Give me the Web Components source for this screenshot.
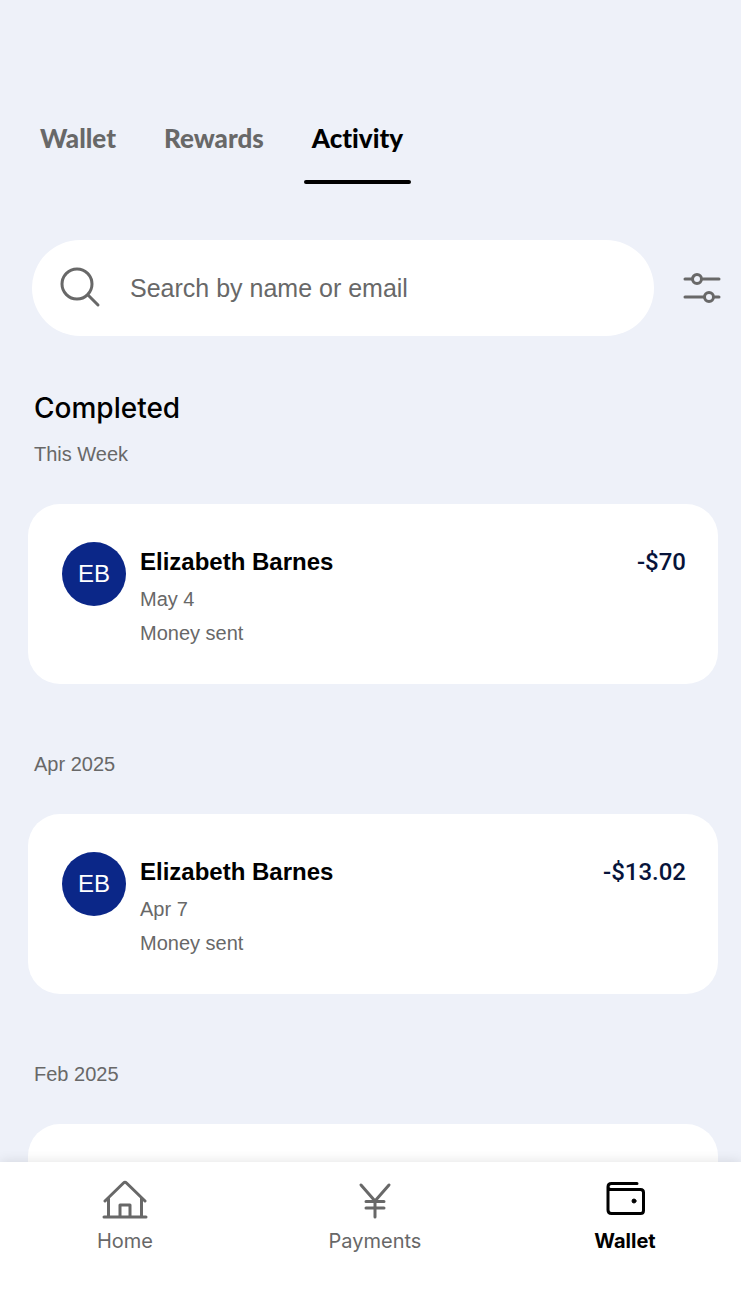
<!DOCTYPE html>
<html lang="en">
<head>
<meta charset="utf-8">
<meta name="viewport" content="width=device-width, initial-scale=1">
<title>Activity</title>
<style>
  body {
    margin: 0;
    background: #eef1f9;
    color: #000;
    font-family: Inter, "Liberation Sans", sans-serif;
    --muted: #686868;
    --navy: #0b2788;
  }
</style>
</head>
<body>
<wallet-app>
  <wallet-tabs slot="header"></wallet-tabs>
  <activity-search></activity-search>
  <activity-section heading="Completed">
    <activity-group label="This Week">
      <activity-item name="Elizabeth Barnes" initials="EB" date="May 4" amount="-$70">Money sent</activity-item>
    </activity-group>
    <activity-group label="Apr 2025">
      <activity-item name="Elizabeth Barnes" initials="EB" date="Apr 7" amount="-$13.02">Money sent</activity-item>
    </activity-group>
    <activity-group label="Feb 2025"></activity-group>
  </activity-section>
  <bottom-nav slot="footer">
    <nav-item label="Home">
      <svg width="48" height="40" viewBox="0 0 48 40" fill="none" stroke="currentColor" stroke-width="3" stroke-linecap="round" stroke-linejoin="round" aria-hidden="true"><path d="M4 21 22.500 3Q24 1.500 25.500 3L44 21M7.500 18.500V37M40.500 18.500V37M3 37H45M19 37V25H29V37"/></svg>
    </nav-item>
    <nav-item label="Payments">
      <svg width="48" height="40" viewBox="0 0 48 40" fill="none" stroke="currentColor" stroke-width="3" stroke-linecap="round" stroke-linejoin="round" aria-hidden="true"><path d="M10 5 24 21 38 5M24 21V37M15 21.500H33M15 28H33"/></svg>
    </nav-item>
    <nav-item label="Wallet" current>
      <svg width="48" height="40" viewBox="0 0 48 40" fill="none" stroke="currentColor" stroke-width="3" stroke-linecap="round" stroke-linejoin="round" aria-hidden="true"><path d="M36 3.500H10.500Q7 3.500 7 7V30Q7 33.500 10.500 33.500H39.500Q42.500 33.500 42.500 30.500V12.500Q42.500 9.500 39.500 9.500H10Q7 9.500 7 6.500"/><circle cx="33" cy="21" r="2" fill="currentColor" stroke-width="1"/></svg>
    </nav-item>
  </bottom-nav>
</wallet-app>

<script>
  class BaseElement extends HTMLElement {
    connectedCallback() {
      if (this.shadowRoot) return;
      this.attachShadow({ mode: "open" }).innerHTML = this.render();
    }
    attr(name) { return this.getAttribute(name) || ""; }
  }

  customElements.define("wallet-app", class extends BaseElement {
    render() {
      return `<style>
        :host { display: grid; grid-template-rows: auto minmax(0, 1fr) auto; height: 100vh; }
        main { overflow: auto; scrollbar-width: none; padding: 56px 20px 0 28px; }
      </style>
      <header><slot name="header"></slot></header>
      <main><slot></slot></main>
      <slot name="footer"></slot>`;
    }
  });

  customElements.define("wallet-tabs", class extends BaseElement {
    render() {
      return `<style>
        :host { display: block; padding: 110px 32px 0; }
        nav { display: flex; gap: 32px; }
        button { border: 0; background: none; margin: 0; padding: 8px 8px 26px; font: 900 26px/40px Lato, sans-serif; font-variant-ligatures: none; color: var(--muted); position: relative; }
        button[aria-current] { color: #000; }
        button[aria-current]::after { content: ""; position: absolute; left: 0; right: 0; bottom: 0; height: 4px; border-radius: 2px; background: #000; }
      </style>
      <nav aria-label="Sections">
        <button type="button">Wallet</button>
        <button type="button">Rewards</button>
        <button type="button" aria-current="page">Activity</button>
      </nav>`;
    }
  });

  customElements.define("activity-search", class extends BaseElement {
    render() {
      return `<style>
        :host { display: flex; align-items: center; gap: 28px; padding-left: 4px; color: var(--muted); }
        label { flex: 1; min-width: 0; display: flex; align-items: center; gap: 28px; height: 96px; box-sizing: border-box; padding: 0 28px; border-radius: 48px; background: #fff; }
        svg { display: block; flex: none; }
        input { flex: 1; min-width: 0; border: 0; padding: 0; outline: 0; background: none; font: 25px/32px "Liberation Sans", sans-serif; color: #000; }
        input::placeholder { color: var(--muted); opacity: 1; }
        button { border: 0; padding: 0; background: none; color: inherit; }
      </style>
      <label>
        <svg width="42" height="42" viewBox="0 0 42 42" fill="none" stroke="currentColor" stroke-width="3" stroke-linecap="round" aria-hidden="true"><circle cx="17" cy="17" r="15"/><path d="M28 28 38 38"/></svg>
        <input type="search" placeholder="Search by name or email" aria-label="Search by name or email">
      </label>
      <button type="button" aria-label="Filters">
        <svg width="39" height="36" viewBox="0 0 39 36" fill="none" stroke="currentColor" stroke-width="3" stroke-linecap="round"><path d="M3 9H10M21 9H37M3 27H22M33 27H37"/><circle cx="15" cy="9" r="4.500"/><circle cx="27" cy="27" r="4.500"/></svg>
      </button>`;
    }
  });

  customElements.define("activity-section", class extends BaseElement {
    render() {
      return `<style>
        :host { display: block; padding: 52px 3px 0 0; }
        h2 { margin: 0 0 10px 6px; font-size: 28px; line-height: 40px; font-weight: 500; }
        .groups { display: flex; flex-direction: column; gap: 64px; }
      </style>
      <h2>${this.attr("heading")}</h2>
      <div class="groups"><slot></slot></div>`;
    }
  });

  customElements.define("activity-group", class extends BaseElement {
    render() {
      return `<style>
        :host { display: block; }
        h3 { margin: 0 0 34px 6px; font: 20px/32px "Liberation Sans", sans-serif; color: var(--muted); }
        .card { min-height: 180px; box-sizing: border-box; padding: 38px 32px 32px 34px; border-radius: 32px; background: #fff; }
      </style>
      <h3>${this.attr("label")}</h3>
      <div class="card"><slot></slot></div>`;
    }
  });

  customElements.define("activity-item", class extends BaseElement {
    render() {
      return `<style>
        :host { display: flex; align-items: flex-start; gap: 14px; }
        .avatar { flex: none; width: 64px; height: 64px; border-radius: 50%; background: var(--navy); color: #fff; font: 24px/64px "Liberation Sans", sans-serif; text-align: center; }
        .details { flex: 1; min-width: 0; font: 20px/34px "Liberation Sans", sans-serif; color: var(--muted); }
        .name { font: 700 24px/40px "Liberation Sans", sans-serif; color: #000; }
        .amount { font: 500 24px/40px Roboto, sans-serif; color: #07143a; }
      </style>
      <div class="avatar" aria-hidden="true">${this.attr("initials")}</div>
      <div class="details">
        <div class="name">${this.attr("name")}</div>
        <div>${this.attr("date")}</div>
        <div><slot></slot></div>
      </div>
      <div class="amount">${this.attr("amount")}</div>`;
    }
  });

  customElements.define("bottom-nav", class extends BaseElement {
    render() {
      return `<style>
        :host { display: block; position: relative; overflow: hidden; background: #fff; box-shadow: 0 0 12px rgba(0, 0, 0, .12); }
        nav { display: grid; grid-template-columns: repeat(3, 1fr); height: 128px; margin-right: -9px; }
      </style>
      <nav aria-label="Main"><slot></slot></nav>`;
    }
  });

  customElements.define("nav-item", class extends BaseElement {
    render() {
      const current = this.hasAttribute("current");
      return `<style>
        :host { display: block; }
        a { display: flex; flex-direction: column; align-items: center; gap: 4px; padding-top: 18px; text-decoration: none; color: var(--muted); font-size: 20px; line-height: 34px; }
        a[aria-current] { color: #000; font-weight: 700; }
      </style>
      <a href="#${this.attr("label").toLowerCase()}"${current ? ' aria-current="page"' : ""}><slot></slot><span>${this.attr("label")}</span></a>`;
    }
  });
</script>
</body>
</html>
